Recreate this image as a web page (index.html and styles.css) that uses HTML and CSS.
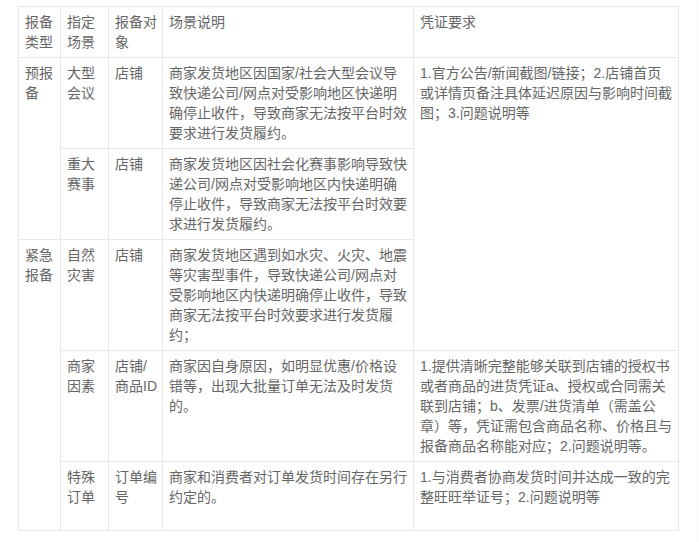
FILE: index.html
```html
<!DOCTYPE html>
<html lang="zh-CN">
<head>
<meta charset="utf-8">
<title>报备场景</title>
<link rel="stylesheet" href="styles.css">
</head>
<body>
<div class="page">
  <table class="report">
    <colgroup>
      <col class="c1"><col class="c2"><col class="c3"><col class="c4"><col class="c5">
    </colgroup>
    <thead>
      <tr>
        <td>报备类型</td>
        <td>指定场景</td>
        <td>报备对象</td>
        <td>场景说明</td>
        <td>凭证要求</td>
      </tr>
    </thead>
    <tbody>
      <tr>
        <td rowspan="2">预报备</td>
        <td>大型会议</td>
        <td>店铺</td>
        <td>商家发货地区因国家/社会大型会议导致快递公司/网点对受影响地区快递明确停止收件，导致商家无法按平台时效要求进行发货履约。</td>
        <td rowspan="3">1.官方公告/新闻截图/链接；2.店铺首页或详情页备注具体延迟原因与影响时间截图；3.问题说明等</td>
      </tr>
      <tr>
        <td>重大赛事</td>
        <td>店铺</td>
        <td>商家发货地区因社会化赛事影响导致快递公司/网点对受影响地区内快递明确停止收件，导致商家无法按平台时效要求进行发货履约。</td>
      </tr>
      <tr>
        <td rowspan="3">紧急报备</td>
        <td>自然灾害</td>
        <td>店铺</td>
        <td>商家发货地区遇到如水灾、火灾、地震等灾害型事件，导致快递公司/网点对受影响地区内快递明确停止收件，导致商家无法按平台时效要求进行发货履约；</td>
      </tr>
      <tr>
        <td>商家因素</td>
        <td>店铺/<span class="nowrap">商品ID</span></td>
        <td>商家因自身原因，如明显优惠/价格设错等，出现大批量订单无法及时发货的。</td>
        <td>1.提供清晰完整能够关联到店铺的授权书或者商品的进货凭证a、授权或合同需关联到店铺；b、发票/进货清单（需盖公章）等，凭证需包含商品名称、价格且与报备商品名称能对应；2.问题说明等。</td>
      </tr>
      <tr class="last">
        <td>特殊订单</td>
        <td>订单编号</td>
        <td>商家和消费者对订单发货时间存在另行约定的。</td>
        <td>1.与消费者协商发货时间并达成一致的完整旺旺举证号；2.问题说明等</td>
      </tr>
    </tbody>
  </table>
</div>
</body>
</html>
```

FILE: styles.css
```css
html, body {
  margin: 0;
  padding: 0;
  background: #fff;
}

.page {
  width: 698px;
  height: 542px;
  box-sizing: border-box;
  padding: 6px 0 0 18px;
  border-right: 1px solid #f1f1f1;
  font-family: "Liberation Sans", "Noto Sans CJK SC", sans-serif;
  font-size: 14px;
  line-height: 20px;
  color: #666;
}

.report {
  border-collapse: collapse;
  table-layout: fixed;
  width: 660px;
}

.c1 { width: 42px; }
.c2 { width: 48px; }
.c3 { width: 54px; }
.c4 { width: 251px; }
.c5 { width: 265px; }

.report td {
  border: 1px solid #e8e8e8;
  padding: 5px 4px 5px 6px;
  vertical-align: top;
  word-break: break-all;
}

.nowrap {
  white-space: nowrap;
}

.report tr.last td {
  height: 58px;
}
```
